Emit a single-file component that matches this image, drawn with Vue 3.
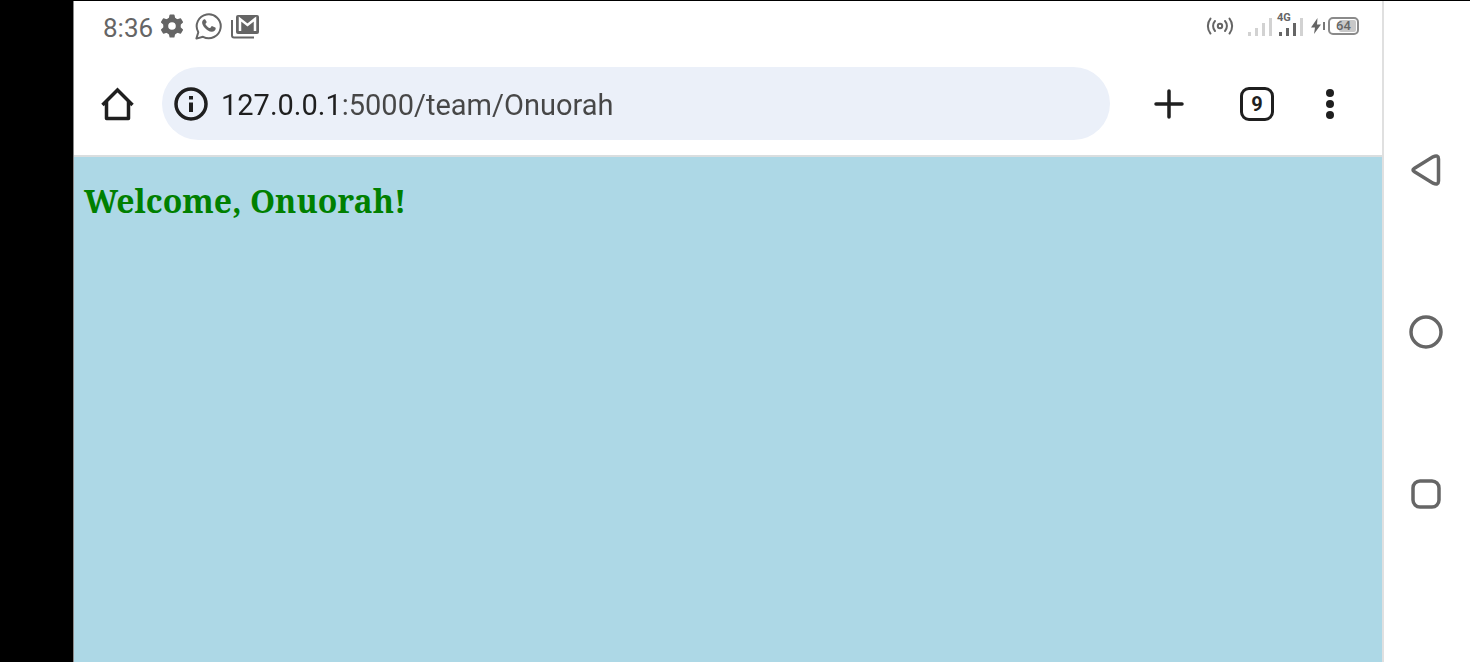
<script setup>
/**
 * Telefone na horizontal: barra de status, navegador e botões do sistema.
 */
import { ref, computed } from 'vue'

const time = ref('8:36')
const address = ref('127.0.0.1:5000/team/Onuorah')
const openTabs = ref(9)
const battery = ref(64)

const member = computed(() => address.value.split('/').pop())
</script>

<template>
  <div class="device">
    <div class="device__cutout"></div>

    <div class="screen">
      <header class="status">
        <div class="status__group">
          <span class="status__time">{{ time }}</span>
          <svg class="status__gear" viewBox="0 0 24 24" aria-hidden="true">
            <circle cx="12" cy="12" r="6.300" fill="none" stroke="currentColor" stroke-width="5" />
            <path
              v-for="angle in [0, 60, 120, 180, 240, 300]"
              :key="angle"
              d="M8.500 5.500L9.500 1Q9.600.4 10.200.4h3.600q.6 0 .7.6l1 4.500z"
              :transform="`rotate(${angle} 12 12)`"
            />
          </svg>
          <svg class="status__chat" viewBox="0 0 28 28" aria-hidden="true">
            <path d="M1.400 26.600l1.900-6.400A12 12 0 1 1 8 24.800z" fill="none" stroke="currentColor" stroke-width="2" stroke-linejoin="round" />
            <path d="M10.400 7.800c-.3-.6-.5-.6-.9-.6-1 0-2.400 1.300-2.400 3.200 0 2 1.400 3.900 2.600 5.300 1.800 2.100 4.500 4 7.100 4 2.200 0 3.900-1.500 3.900-3.200 0-.5-.1-.7-.5-.9l-2.800-1.400c-.4-.2-.7-.1-1 .3l-1 1.300c-.2.3-.5.3-.9.1-1.600-.7-3-1.900-3.900-3.500-.2-.4-.1-.6.1-.9l.8-1c.2-.3.2-.5.1-.8z" />
          </svg>
          <svg class="status__mail" viewBox="0 0 28 24" aria-hidden="true">
            <path d="M1 5v15.500a2 2 0 0 0 2 2h20" fill="none" stroke="currentColor" stroke-width="2" />
            <rect x="5" y="0" width="23" height="19" rx="2" />
            <path d="M9 16V4l7.500 6L24 4v12" fill="none" stroke="#fff" stroke-width="2.500" />
          </svg>
        </div>

        <div class="status__group status__group--end">
          <svg class="status__hotspot" viewBox="0 0 28 20" aria-hidden="true" fill="none" stroke="currentColor" stroke-width="2" stroke-linecap="round">
            <circle cx="14" cy="10" r="2.200" />
            <path d="M9 5a7.500 7.500 0 0 0 0 10M19 5a7.500 7.500 0 0 1 0 10M4.500 2.500a12 12 0 0 0 0 15M23.500 2.500a12 12 0 0 1 0 15" />
          </svg>
          <svg class="status__signal" viewBox="0 0 24 26" aria-hidden="true">
            <path class="weak" d="M0 19h3v4H0zM7 15h3v8H7zM14 10h3v13h-3zM21 5h3v18h-3z" />
          </svg>
          <svg class="status__signal status__signal--data" viewBox="0 0 26 26" aria-hidden="true">
            <text x="0" y="8">4G</text>
            <path d="M2 19h3v4H2zM9 15h3v8H9zM16 10h3v13h-3z" />
            <path class="weak" d="M23 5h3v18h-3z" />
          </svg>
          <svg class="status__bolt" viewBox="0 0 10 16" aria-hidden="true">
            <path d="M6.500 0L0 9.500h4L3 16l7-9.500H6z" />
          </svg>
          <span class="battery">
            <span class="battery__tip"></span>
            <span class="battery__body">
              <span class="battery__fill" :style="{ width: battery + '%' }"></span>
              <span class="battery__value">{{ battery }}</span>
            </span>
          </span>
        </div>
      </header>

      <nav class="toolbar">
        <button type="button" class="toolbar__home" aria-label="Home">
          <svg width="34" height="34" viewBox="0 0 34 34" fill="none" stroke="currentColor" stroke-width="3.500" stroke-linejoin="round">
            <path d="M1.500 18L16.500 3l15 15" stroke-linejoin="miter" />
            <path d="M5.500 14.500v17h22v-17" />
          </svg>
        </button>

        <form class="omnibox" @submit.prevent>
          <button type="button" class="omnibox__info" aria-label="Site information">
            <svg width="34" height="34" viewBox="0 0 34 34">
              <circle cx="17" cy="17" r="15" fill="none" stroke="currentColor" stroke-width="3.500" />
              <path d="M15 9h4v3.500h-4zM15 15.500h4V25h-4z" />
            </svg>
          </button>
          <input v-model="address" class="omnibox__input" type="text" aria-label="Address" spellcheck="false" />
        </form>

        <button type="button" class="toolbar__button" aria-label="New tab">
          <svg width="30" height="30" viewBox="0 0 30 30" fill="none" stroke="currentColor" stroke-width="3.500" stroke-linecap="round">
            <path d="M15 2v26M2 15h26" />
          </svg>
        </button>
        <button type="button" class="toolbar__button" aria-label="Open tabs">
          <span class="toolbar__tabs">{{ openTabs }}</span>
        </button>
        <button type="button" class="toolbar__button toolbar__button--menu" aria-label="Menu">
          <svg width="8" height="30" viewBox="0 0 8 30">
            <circle cx="4" cy="4" r="4" />
            <circle cx="4" cy="15" r="4" />
            <circle cx="4" cy="26" r="4" />
          </svg>
        </button>
      </nav>

      <main class="page">
        <h1 class="page__title">Welcome, {{ member }}!</h1>
      </main>
    </div>

    <aside class="system">
      <button type="button" class="system__button" aria-label="Back">
        <svg width="36" height="36" viewBox="0 0 36 36">
          <path d="M6.500 16.200L25 4.800Q30.500 2.500 30.500 7v22q0 4.500-5.500 2.200L6.500 19.800Q3.500 18 6.500 16.200z" />
        </svg>
      </button>
      <button type="button" class="system__button" aria-label="Home screen">
        <svg width="36" height="36" viewBox="0 0 36 36">
          <circle cx="18" cy="18" r="15" />
        </svg>
      </button>
      <button type="button" class="system__button" aria-label="Recent apps">
        <svg width="36" height="36" viewBox="0 0 36 36">
          <rect x="5" y="5" width="26" height="26" rx="7" />
        </svg>
      </button>
    </aside>
  </div>
</template>

<style>
body {
  margin: 0;
}
</style>

<style scoped>
.device {
  box-sizing: border-box;
  display: flex;
  min-height: 100vh;
  border-top: 1px solid #000;
  background: #fff;
  font-family: Roboto, "Liberation Sans", sans-serif;
}
.device__cutout {
  flex: none;
  width: 73px;
  border-right: 1px solid #8a8a8a;
  background: #000;
}
button {
  display: flex;
  align-items: center;
  justify-content: center;
  border: none;
  padding: 0;
  background: none;
  color: inherit;
  font-family: inherit;
  cursor: pointer;
}
svg {
  display: block;
  flex: none;
  fill: currentColor;
}
svg[fill="none"] { fill: none; }

.screen {
  flex: 1;
  min-width: 0;
  display: flex;
  flex-direction: column;
}

.status {
  display: flex;
  justify-content: space-between;
  height: 50px;
  padding: 0 23px 0 29px;
  color: #656565;
}
.status__group {
  display: flex;
  align-items: center;
}
.status__time {
  margin-right: 7px;
  padding-top: 3px;
  font-size: 26px;
  line-height: 30px;
}
.status__gear { width: 24px; height: 24px; margin-right: 11px; }
.status__chat { width: 28px; height: 28px; margin-right: 8px; }
.status__mail { width: 28px; height: 24px; padding-top: 2px; }
.status__hotspot { width: 28px; height: 20px; margin-right: 14px; }
.status__signal { width: 24px; height: 26px; margin-right: 5px; overflow: visible; }
.status__signal--data { width: 26px; margin-right: 8px; }
.status__signal text {
  font-size: 11px;
  font-weight: 700;
}
.weak { fill: #d2d2d2; }
.status__bolt { width: 10px; height: 16px; margin-right: 2px; }

.battery {
  display: flex;
  align-items: center;
  gap: 3px;
}
.battery__tip {
  width: 2px;
  height: 8px;
  background: #777;
}
.battery__body {
  box-sizing: border-box;
  position: relative;
  display: flex;
  align-items: center;
  justify-content: center;
  width: 31px;
  height: 18px;
  border: 2px solid #8a8a8a;
  border-radius: 5px;
}
.battery__fill {
  position: absolute;
  top: 1px;
  right: 1px;
  bottom: 1px;
  border-radius: 2px;
  background: #c8c8c8;
}
.battery__value {
  position: relative;
  font-size: 13px;
  font-weight: 500;
  line-height: 14px;
}

.toolbar {
  display: flex;
  align-items: center;
  padding: 16px 23px 15px 20px;
  border-bottom: 2px solid #dadedf;
  color: #1f1f1f;
}
.toolbar__home {
  width: 48px;
  height: 48px;
  margin-right: 20px;
}
.toolbar__button {
  width: 88px;
  height: 48px;
}
.toolbar__button--menu { width: 58px; }
.toolbar__tabs {
  box-sizing: border-box;
  width: 34px;
  height: 34px;
  border: 3px solid currentColor;
  border-radius: 9px;
  font-size: 20px;
  font-weight: 700;
  line-height: 28px;
}

.omnibox {
  flex: 1;
  min-width: 0;
  display: flex;
  align-items: center;
  gap: 13px;
  height: 73px;
  margin-right: 15px;
  padding: 0 32px 0 12px;
  border-radius: 37px;
  background: #ebf0f9;
}
.omnibox__info { flex: none; }
/* o host fica mais escuro que a porta e o caminho */
.omnibox__input {
  flex: 1;
  min-width: 0;
  height: 40px;
  border: none;
  outline: none;
  padding: 2px 0 0;
  background: linear-gradient(90deg, #1f1f1f 122px, #474747 122px);
  background-clip: text;
  -webkit-text-fill-color: transparent;
  caret-color: #1f1f1f;
  font-family: inherit;
  font-size: 29px;
}

.page {
  flex: 1;
  padding: 22px 10px;
  background: #add8e6;
}
.page__title {
  margin: 0;
  color: #008000;
  font-family: "Noto Serif", "Droid Serif", "DejaVu Serif", serif;
  font-size: 32px;
  font-weight: 700;
  line-height: 44px;
}

.system {
  box-sizing: border-box;
  flex: none;
  display: flex;
  flex-direction: column;
  align-items: center;
  justify-content: center;
  gap: 122px;
  width: 88px;
  padding-right: 2px;
  border-left: 2px solid #e0e0e0;
  color: #666;
}
.system__button {
  width: 40px;
  height: 40px;
}
.system__button svg {
  fill: none;
  stroke: currentColor;
  stroke-width: 3.5px;
}
</style>
